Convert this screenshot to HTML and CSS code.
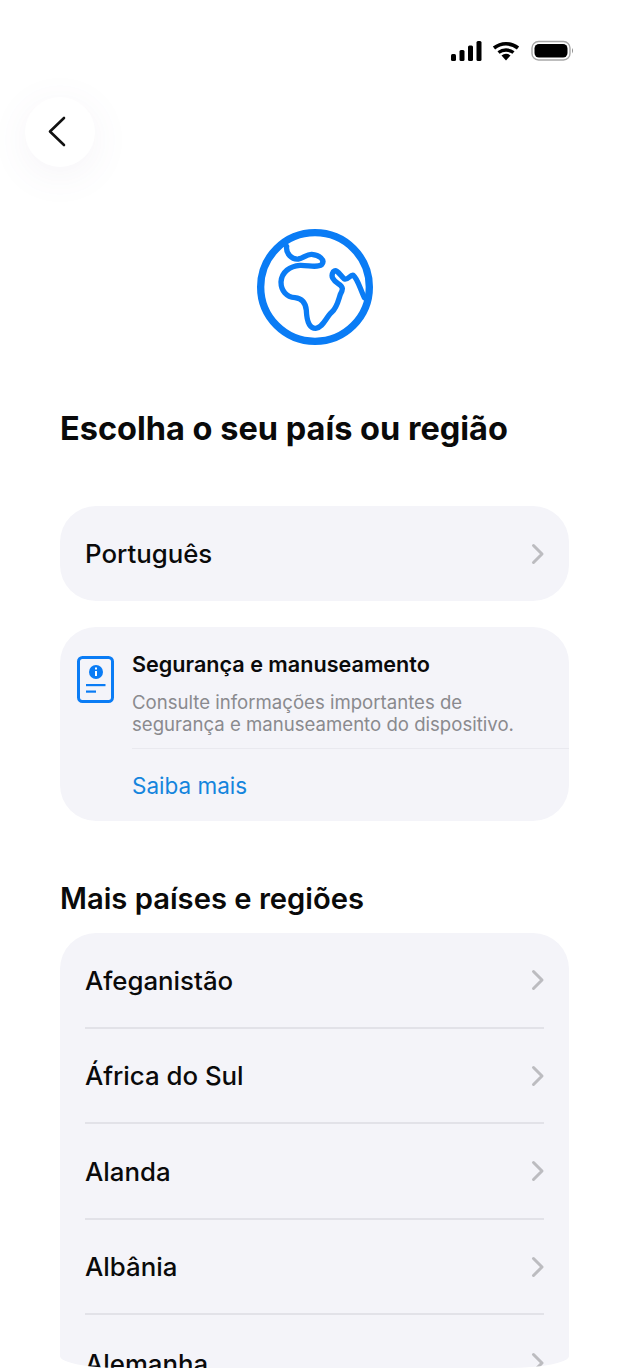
FILE: index.html
```html
<!DOCTYPE html>
<html lang="pt">
<head>
    <meta charset="UTF-8">
    <meta name="viewport" content="width=device-width, initial-scale=1.0">
    <title>Escolha o seu país ou região</title>
    <link rel="stylesheet" href="styles.css">
</head>
<body>

<div class="screen">
    <div class="status-bar">
        <svg class="status-icons" width="124" height="22" viewBox="0 0 124 22">
            <rect x="0" y="14" width="5" height="7" rx="1.5"/>
            <rect x="8.5" y="10" width="5" height="11" rx="1.5"/>
            <rect x="17" y="5.5" width="5" height="15.5" rx="1.5"/>
            <rect x="25.5" y="1" width="5" height="20" rx="1.5"/>
            <path d="M43 8 A19 19 0 0 1 67 8" fill="none" stroke="#000" stroke-width="3.6"/>
            <path d="M47.5 12.5 A12.5 12.5 0 0 1 62.5 12.5" fill="none" stroke="#000" stroke-width="3.4"/>
            <path d="M50.5 15.5 A7 7 0 0 1 59.5 15.5 L55 20.5 Z"/>
            <rect x="81" y="1.5" width="38" height="18.5" rx="6.5" fill="none" stroke="#a8a8a8" stroke-width="1.4"/>
            <rect x="83.5" y="4" width="33" height="13.5" rx="4.5"/>
            <path d="M121 8 Q123 10.7 121 13.5 Z" fill="#8e8e8e"/>
        </svg>
    </div>

    <button type="button" class="back-btn">
        <svg width="20" height="32" viewBox="0 0 20 32">
            <path d="M17 2 L3 15.5 L17 29" fill="none" stroke="#111" stroke-width="2.6" stroke-linecap="round" stroke-linejoin="round"/>
        </svg>
    </button>

    <div class="globe">
        <svg width="120" height="120" viewBox="30 20 360 360">
            <circle cx="210" cy="200" r="163" fill="none" stroke="#0a7cf5" stroke-width="22"/>
            <path d="M125 78 C122 100 140 118 160 116 C175 114 185 101 200 102 C222 104 242 118 230 133 C216 144 190 134 165 135 C135 137 110 155 108 185 C108 212 125 230 150 232 C170 234 182 248 184 270 C185 296 190 324 212 324 C234 322 242 292 260 276 C276 262 280 240 286 222 C294 208 296 200 280 190 C264 180 256 168 265 154 C276 144 286 166 298 176 C310 180 315 162 325 165 C338 175 345 205 358 232" fill="none" stroke="#0a7cf5" stroke-width="16" stroke-linecap="round" stroke-linejoin="round"/>
        </svg>
    </div>

    <h1 class="page-title">Escolha o seu país ou região</h1>

    <div class="card single-row">
        <div class="row">
            <span class="row-label">Português</span>
            <svg class="chevron" width="14" height="22" viewBox="0 0 14 22">
                <path d="M2.5 2.5 L11 11 L2.5 19.5" fill="none" stroke="#bcbcc0" stroke-width="3" stroke-linecap="round" stroke-linejoin="round"/>
            </svg>
        </div>
    </div>

    <div class="card safety">
        <svg class="safety-icon" width="38" height="48" viewBox="0 0 38 48">
            <rect x="1.5" y="1.5" width="34" height="44" rx="4" fill="none" stroke="#0a7cf5" stroke-width="3"/>
            <circle cx="19" cy="16" r="7" fill="#0a7cf5"/>
            <rect x="18" y="15" width="2" height="5" fill="#fff"/>
            <rect x="18" y="11.5" width="2" height="2" fill="#fff"/>
            <rect x="9" y="28" width="19.5" height="2.2" fill="#0a7cf5"/>
            <rect x="9" y="34.5" width="10" height="2.2" fill="#0a7cf5"/>
        </svg>
        <div class="safety-body">
            <div class="safety-title">Segurança e manuseamento</div>
            <p class="safety-text">Consulte informações importantes de<br>segurança e manuseamento do dispositivo.</p>
            <a class="safety-link" href="#">Saiba mais</a>
        </div>
    </div>

    <h2 class="section-title">Mais países e regiões</h2>

    <div class="card list">
        <div class="row list-row">
            <span class="row-label">Afeganistão</span>
            <svg class="chevron" width="14" height="22" viewBox="0 0 14 22"><path d="M2.5 2.5 L11 11 L2.5 19.5" fill="none" stroke="#bcbcc0" stroke-width="3" stroke-linecap="round" stroke-linejoin="round"/></svg>
        </div>
        <div class="row list-row">
            <span class="row-label">África do Sul</span>
            <svg class="chevron" width="14" height="22" viewBox="0 0 14 22"><path d="M2.5 2.5 L11 11 L2.5 19.5" fill="none" stroke="#bcbcc0" stroke-width="3" stroke-linecap="round" stroke-linejoin="round"/></svg>
        </div>
        <div class="row list-row">
            <span class="row-label">Alanda</span>
            <svg class="chevron" width="14" height="22" viewBox="0 0 14 22"><path d="M2.5 2.5 L11 11 L2.5 19.5" fill="none" stroke="#bcbcc0" stroke-width="3" stroke-linecap="round" stroke-linejoin="round"/></svg>
        </div>
        <div class="row list-row">
            <span class="row-label">Albânia</span>
            <svg class="chevron" width="14" height="22" viewBox="0 0 14 22"><path d="M2.5 2.5 L11 11 L2.5 19.5" fill="none" stroke="#bcbcc0" stroke-width="3" stroke-linecap="round" stroke-linejoin="round"/></svg>
        </div>
        <div class="row list-row">
            <span class="row-label">Alemanha</span>
            <svg class="chevron" width="14" height="22" viewBox="0 0 14 22"><path d="M2.5 2.5 L11 11 L2.5 19.5" fill="none" stroke="#bcbcc0" stroke-width="3" stroke-linecap="round" stroke-linejoin="round"/></svg>
        </div>
    </div>
</div>

</body>
</html>
```

FILE: styles.css
```css
body {
    margin: 0;
    padding: 0;
    background-color: #fff;
    font-family: Inter, "Liberation Sans", sans-serif;
    color: #0a0a0a;
}

.screen {
    height: 1368px;
    overflow: hidden;
    padding: 0 60px;
    box-sizing: border-box;
}

.status-bar {
    display: flex;
    justify-content: flex-end;
    height: 97px;
    padding-top: 40px;
    margin-right: -6px;
    box-sizing: border-box;
}

.status-icons {
    display: block;
}

.back-btn {
    display: flex;
    align-items: center;
    justify-content: center;
    width: 70px;
    height: 70px;
    margin-left: -35px;
    padding: 0 6px 0 0;
    border: none;
    border-radius: 50%;
    background-color: #fff;
    box-shadow: 0 8px 40px rgba(110, 90, 140, 0.07);
}

.globe {
    display: flex;
    justify-content: center;
    margin-top: 60px;
}

.globe svg {
    display: block;
}

.page-title {
    margin: 62px 0 0;
    font-size: 32.5px;
    line-height: 40px;
    font-weight: 700;
    white-space: nowrap;
}

.card {
    background-color: #f4f4f9;
    border-radius: 36px;
}

.single-row {
    margin-top: 57px;
    height: 95px;
    display: flex;
    align-items: center;
    padding: 0 25px;
}

.row {
    display: flex;
    align-items: center;
    justify-content: space-between;
    width: 100%;
}

.row-label {
    font-size: 25.8px;
    font-weight: 500;
}

.chevron {
    display: block;
    margin-right: -0.5px;
}

.safety {
    display: flex;
    margin-top: 26px;
    height: 194px;
    padding: 29px 0 0 17px;
    box-sizing: border-box;
}

.safety-icon {
    display: block;
    flex-shrink: 0;
}

.safety-body {
    flex: 1;
    margin-left: 17px;
}

.safety-title {
    font-size: 21.6px;
    line-height: 20px;
    font-weight: 600;
    margin-top: -2px;
    white-space: nowrap;
}

.safety-text {
    margin: 17px 0 0;
    padding-bottom: 13px;
    font-size: 18.6px;
    line-height: 22px;
    color: #8a8a8e;
    border-bottom: 1px solid #e9e9ef;
    white-space: nowrap;
}

.safety-link {
    display: block;
    margin-top: 23px;
    font-size: 22.5px;
    line-height: 28px;
    color: #1485dd;
    text-decoration: none;
}

.section-title {
    margin: 60px 0 0;
    font-size: 29.2px;
    line-height: 36px;
    font-weight: 600;
}

.list {
    margin-top: 16px;
    height: 435px;
    padding: 0 25px;
    overflow: hidden;
    border-radius: 36px 36px 60px 60px / 36px 36px 12px 12px;
}

.list-row {
    height: 95.5px;
    padding-top: 1px;
    box-sizing: border-box;
    border-bottom: 2px solid #e2e2e8;
}

.list-row:last-child {
    border-bottom: none;
}
```
